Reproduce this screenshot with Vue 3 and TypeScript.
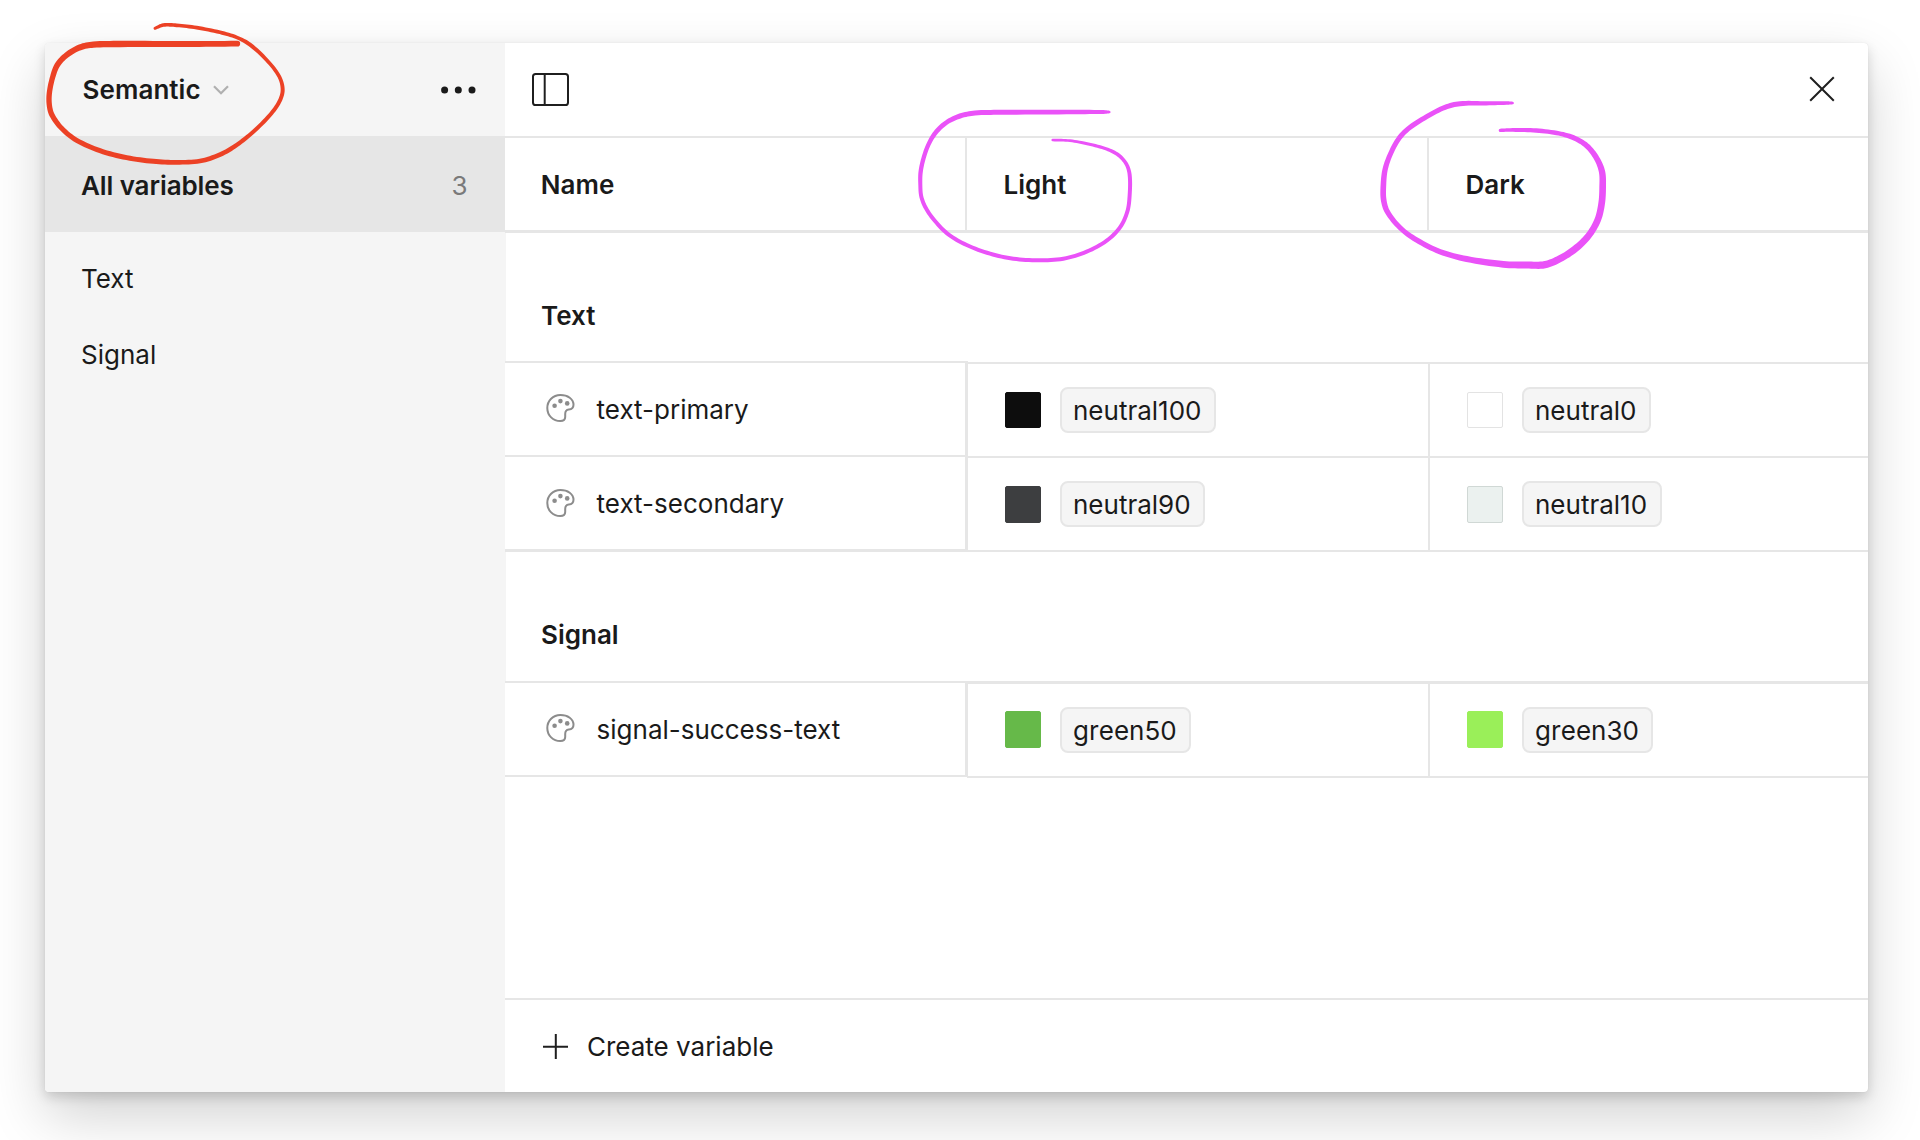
<script setup lang="ts">
type Point = [x: number, y: number, width: number]

interface Swatch {
  color: string
  label: string
  outlined?: string
}

interface Variable {
  name: string
  values: Swatch[]
}

interface Group {
  title: string
  variables: Variable[]
}

const groups: Group[] = [
  {
    title: 'Text',
    variables: [
      {
        name: 'text-primary',
        values: [
          { color: '#0d0d0d', label: 'neutral100' },
          { color: '#ffffff', label: 'neutral0', outlined: '#e3e3e3' },
        ],
      },
      {
        name: 'text-secondary',
        values: [
          { color: '#3d3e40', label: 'neutral90' },
          { color: '#ebf1ef', label: 'neutral10', outlined: '#d0d8d5' },
        ],
      },
    ],
  },
  {
    title: 'Signal',
    variables: [
      {
        name: 'signal-success-text',
        values: [
          { color: '#66b949', label: 'green50' },
          { color: '#9aef59', label: 'green30' },
        ],
      },
    ],
  },
]

// Pen strokes: centre line points with the pen width at each, in thirds of a pixel.
const redPen: Point[] = [
  [652, 101, 17], [500, 102, 18], [300, 102, 19], [220, 104, 19], [180, 112, 18], [140, 135, 17],
  [112, 165, 17], [97, 205, 16], [88, 250, 16], [88, 285, 16], [96, 315, 16], [125, 355, 15],
  [170, 391, 15], [240, 422, 15], [320, 443, 15], [400, 454, 15], [470, 457, 14], [540, 453, 14],
  [600, 434, 14], [650, 405, 13], [700, 365, 12], [750, 315, 12], [778, 275, 12], [788, 240, 12],
  [778, 200, 11], [740, 150, 11], [690, 104, 12], [650, 82, 11], [600, 67, 11], [530, 53, 11],
  [470, 46, 11], [430, 45, 11], [405, 55, 9],
]
const lightPen: Point[] = [
  [628, 66, 8], [610, 66, 12], [500, 66, 14], [300, 67, 15], [225, 69, 15], [180, 78, 15],
  [140, 97, 14], [110, 124, 14], [88, 158, 13], [72, 200, 13], [62, 245, 13], [61, 285, 12],
  [64, 320, 12], [78, 355, 12], [105, 393, 12], [145, 433, 12], [200, 465, 12], [270, 491, 12],
  [340, 506, 12], [415, 511, 12], [490, 506, 12], [560, 485, 12], [620, 452, 12], [660, 412, 12],
  [682, 365, 12], [689, 315, 12], [689, 255, 12], [679, 222, 11], [655, 195, 11], [620, 177, 10],
  [565, 162, 9], [510, 152, 8], [458, 150, 8],
]
const darkPen: Point[] = [
  [458, 39, 8], [440, 39, 11], [370, 40, 13], [300, 41, 15], [255, 52, 15], [200, 80, 15],
  [145, 116, 15], [115, 148, 15], [90, 195, 15], [75, 240, 16], [70, 290, 17], [71, 330, 17],
  [82, 365, 16], [120, 413, 15], [170, 450, 16], [240, 485, 16], [320, 507, 18], [430, 523, 20],
  [500, 525, 21], [555, 524, 22], [600, 506, 21], [645, 477, 21], [685, 438, 20], [713, 390, 20],
  [725, 340, 20], [728, 290, 20], [726, 245, 19], [710, 205, 17], [680, 167, 16], [640, 143, 15],
  [590, 129, 13], [520, 121, 13], [450, 120, 11], [421, 121, 10],
]

// Turns a centre line of varying width into a closed outline with rounded ends.
function outline(points: Point[], left: number, top: number): string {
  const at = (i: number) => points[Math.max(0, Math.min(points.length - 1, i))]
  const line: Point[] = []
  for (let i = 0; i < points.length - 1; i++) {
    for (let s = 0; s < 8; s++) {
      const t = s / 8
      const p = [0, 1, 2].map((k) => {
        const [a, b, c, d] = [at(i - 1)[k], at(i)[k], at(i + 1)[k], at(i + 2)[k]]
        if (k === 2) return b + (c - b) * t
        // Tangents scaled by segment length keep long runs straight.
        const len = (m: Point, n: Point) => Math.hypot(n[0] - m[0], n[1] - m[1]) || 1
        const l0 = len(at(i - 1), at(i))
        const l1 = len(at(i), at(i + 1))
        const l2 = len(at(i + 1), at(i + 2))
        const m1 = ((c - a) / (l0 + l1)) * l1
        const m2 = ((d - b) / (l1 + l2)) * l1
        const t2 = t * t
        const t3 = t2 * t
        return (2 * t3 - 3 * t2 + 1) * b + (t3 - 2 * t2 + t) * m1 + (3 * t2 - 2 * t3) * c + (t3 - t2) * m2
      })
      line.push([left + p[0] / 3, top + p[1] / 3, p[2] / 3])
    }
  }
  const last = points[points.length - 1]
  line.push([left + last[0] / 3, top + last[1] / 3, last[2] / 3])

  const side = (sign: number) =>
    line.map(([x, y, w], i) => {
      const a = line[Math.max(0, i - 1)]
      const b = line[Math.min(line.length - 1, i + 1)]
      const l = Math.hypot(b[0] - a[0], b[1] - a[1]) || 1
      const nx = (-(b[1] - a[1]) / l) * (w / 2) * sign
      const ny = ((b[0] - a[0]) / l) * (w / 2) * sign
      return `${(x + nx).toFixed(2)} ${(y + ny).toFixed(2)}`
    })
  const one = side(1)
  const two = side(-1).reverse()
  const endR = last[2] / 6
  const startR = points[0][2] / 6
  return `M${one.join('L')}A${endR} ${endR} 0 0 0 ${two[0]}L${two.join('L')}A${startR} ${startR} 0 0 0 ${one[0]}Z`
}

const pens = [
  { color: '#ec4125', d: outline(redPen, 20, 10) },
  { color: '#ea52f8', d: outline(lightPen, 900, 90) },
  { color: '#ea52f8', d: outline(darkPen, 1360, 90) },
]
</script>

<template>
  <div class="stage">
    <div class="window">
      <aside class="sidebar">
        <header class="collection">
          <span class="strong">Semantic</span>
          <svg class="chevron" width="18" height="12" viewBox="0 0 18 12">
            <path d="M2 2.2L9 9.3L16 2.2" fill="none" stroke="#b0b0b0" stroke-width="2.2" />
          </svg>
          <svg class="more" width="36" height="8" viewBox="0 0 36 8">
            <circle cx="4.6" cy="4" r="3.5" />
            <circle cx="18.3" cy="4" r="3.5" />
            <circle cx="32" cy="4" r="3.5" />
          </svg>
        </header>
        <div class="all">
          <span class="all-label strong">All variables</span>
          <span class="count">3</span>
        </div>
        <nav class="groups">
          <div v-for="group in groups" :key="group.title" class="group-link">{{ group.title }}</div>
        </nav>
      </aside>

      <main class="main">
        <header class="toolbar">
          <svg class="panel" width="37" height="33" viewBox="0 0 37 33">
            <rect x="1" y="1" width="35" height="31" rx="2.6" />
            <path d="M12.7 1V32" />
          </svg>
          <svg class="close" width="26" height="26" viewBox="0 0 26 26">
            <path d="M1.2 1.2L24.8 24.8M24.8 1.2L1.2 24.8" />
          </svg>
        </header>

        <div class="columns strong">
          <div class="column column-name">Name</div>
          <div class="column column-light">Light</div>
          <div class="column column-dark">Dark</div>
        </div>

        <section v-for="group in groups" :key="group.title" class="group">
          <h2 class="group-title strong">{{ group.title }}</h2>
          <div class="table">
            <div class="names">
              <div v-for="variable in group.variables" :key="variable.name" class="name">
                <svg class="palette" width="29" height="28" viewBox="0 0 29 28">
                  <path
                    d="M14.3 1C7.1 1 1.3 6.8 1.3 14c0 7.6 5.8 13 13 13 3.6 0 4.9-1.1 4.9-4v-2.9c0-3.1 1.1-4.2 3.6-4.5 2.9-.3 4.7-1.9 4.7-4.8C27.5 4.9 21.8 1 14.3 1z"
                    fill="none"
                    stroke="#8c8c8c"
                    stroke-width="2"
                  />
                  <g fill="#8c8c8c">
                    <circle cx="8.6" cy="11.7" r="2.3" />
                    <circle cx="14.4" cy="7.1" r="2.3" />
                    <circle cx="21.2" cy="9.4" r="2.3" />
                  </g>
                </svg>
                <span>{{ variable.name }}</span>
              </div>
            </div>
            <div class="values">
              <div v-for="variable in group.variables" :key="variable.name" class="value-row">
                <div v-for="value in variable.values" :key="value.label" class="value">
                  <span
                    class="swatch"
                    :style="{ background: value.color, borderColor: value.outlined ?? value.color }"
                  ></span>
                  <span class="chip">{{ value.label }}</span>
                </div>
              </div>
            </div>
          </div>
        </section>

        <footer class="create">
          <svg class="plus" width="25" height="25" viewBox="0 0 25 25">
            <path d="M12.8 0V25M0 12.8H25" />
          </svg>
          <span>Create variable</span>
        </footer>
      </main>
    </div>

    <svg class="ink" width="1920" height="1140" viewBox="0 0 1920 1140">
      <path v-for="(pen, i) in pens" :key="i" :d="pen.d" :fill="pen.color" />
    </svg>
  </div>
</template>

<style>
body {
  background: #fff;
}
</style>

<style scoped>
.stage {
  position: relative;
  box-sizing: border-box;
  width: 1920px;
  height: 1140px;
  padding: 43px 52px 48px 45px;
  overflow: hidden;
  font-family: Inter, 'Liberation Sans', sans-serif;
  font-size: 26px;
  line-height: 31px;
  color: #1a1a1a;
  white-space: nowrap;
}
.stage * {
  box-sizing: border-box;
}
.strong {
  font-weight: 600;
}
.window {
  display: flex;
  height: 1049px;
  border-radius: 4px;
  background: #fff;
  box-shadow:
    0 0 1px rgba(0, 0, 0, 0.12),
    0 5px 12px rgba(0, 0, 0, 0.15),
    0 24px 56px rgba(0, 0, 0, 0.18);
}
.ink {
  position: absolute;
  inset: 0;
  pointer-events: none;
}

/* Sidebar */
.sidebar {
  width: 460px;
  flex: none;
  border-radius: 4px 0 0 4px;
  background: #f5f5f5;
}
.collection {
  display: flex;
  height: 93px;
  padding: 31px 29px 0 37.6px;
}
.collection .strong {
  letter-spacing: 0.05px;
}
.chevron {
  margin: 10px 0 0 11.4px;
}
.more {
  margin: 12px 0 0 auto;
  fill: #1a1a1a;
}
.all {
  display: flex;
  justify-content: space-between;
  height: 96px;
  padding: 34px 37.5px 0 36px;
  background: #e6e6e6;
}
.all-label {
  letter-spacing: -0.1px;
}
.count {
  color: #7a7a7a;
}
.groups {
  display: flex;
  flex-direction: column;
  padding: 31px 0 0 36px;
}
.group-link {
  height: 76px;
}

/* Main area */
.main {
  display: flex;
  flex: 1;
  flex-direction: column;
  min-width: 0;
}
.toolbar {
  display: flex;
  justify-content: space-between;
  height: 95px;
  padding: 30px 33px 0 27px;
  border-bottom: 2px solid #e6e6e6;
}
.panel,
.close,
.plus {
  fill: none;
  stroke: #1f1f1f;
  stroke-width: 2;
}
.close {
  margin-top: 3px;
}
.columns {
  display: flex;
  height: 95px;
  border-bottom: 3px solid #e6e6e6;
}
.column {
  padding-top: 31px;
}
.column-name {
  width: 460px;
  padding-left: 35.8px;
}
.column-light {
  width: 462px;
  padding-left: 36.5px;
  border-left: 2px solid #e6e6e6;
}
.column-dark {
  flex: 1;
  padding-left: 36.5px;
  border-left: 2px solid #e6e6e6;
}
.group-title {
  height: 128px;
  margin: 0;
  padding: 67px 0 0 35px;
  border-left: 1px solid #f5f5f5;
  font-size: inherit;
}
.group + .group .group-title {
  height: 129px;
}
.table {
  display: flex;
}
.names {
  width: 463px;
  flex: none;
  border-right: 3px solid #e6e6e6;
}
.name {
  display: flex;
  height: 94px;
  padding: 31px 0 0 41px;
  border-top: 2px solid #e6e6e6;
}
.name:last-child {
  height: 97px;
  border-bottom: 3px solid #e6e6e6;
}
.name:first-child:last-child {
  height: 96px;
  border-bottom-width: 2px;
}
.palette {
  margin-right: 21.6px;
}
.name + .name .palette {
  margin-top: 1px;
}
.values {
  flex: 1;
  min-width: 0;
  margin: 1px 0 0 -1px;
  border-bottom: 2px solid #e6e6e6;
}
.group + .group .values {
  margin-top: 0;
  margin-bottom: -1px;
}
.group + .group .value-row {
  height: 95px;
  border-top-width: 3px;
}
.value-row {
  display: flex;
  height: 94px;
  border-top: 2px solid #e6e6e6;
}
.value {
  display: flex;
  flex: none;
  width: 461px;
  padding: 23px 0 0 38px;
}
.value + .value {
  flex: 1;
  padding-left: 37px;
  border-left: 2px solid #e6e6e6;
}
.swatch {
  width: 36px;
  height: 36px;
  margin: 5px 19px 0 0;
  border: 1px solid;
  border-radius: 2px;
}
.value-row + .value-row .swatch {
  height: 37px;
}
.group + .group .swatch {
  height: 37px;
  margin-top: 4px;
}
.chip {
  height: 46px;
  padding: 6px 12.6px 5px 11px;
  border: 2px solid #e6e6e6;
  border-radius: 8px;
  background: #f5f5f5;
  font-kerning: none;
}
.create {
  display: flex;
  height: 94px;
  margin-top: auto;
  padding: 31px 0 0 38px;
  border-top: 2px solid #e6e6e6;
}
.plus {
  margin: 3px 19px 0 0;
}
</style>
